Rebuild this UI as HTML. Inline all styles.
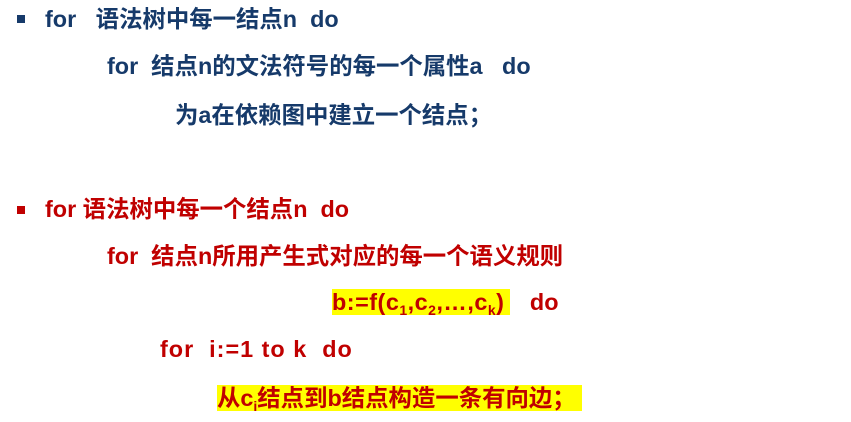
<!DOCTYPE html>
<html><head><meta charset="utf-8"><style>
html,body{margin:0;padding:0;background:#fff;width:851px;height:422px;overflow:hidden;position:relative}
.l{position:absolute;white-space:pre;font-family:"Liberation Sans","Noto Sans CJK SC",sans-serif;font-weight:bold;font-size:23.4px;line-height:27px}
.b{color:#163a6a}.r{color:#c00000}
.sq{position:absolute;width:8px;height:8px}
.hl{background:#ffff00}
sub{font-size:14px;vertical-align:-5px;line-height:0}
</style></head><body>
<div class="sq" style="left:17px;top:15px;background:#163a6a"></div>
<div class="l b" style="left:45px;top:6px">for   语法树中每一结点n  do</div>
<div class="l b" style="left:107px;top:53px">for  结点n的文法符号的每一个属性a   do</div>
<div class="l b" style="left:175px;top:102px">为a在依赖图中建立一个结点；</div>
<div class="sq" style="left:17px;top:206px;background:#c00000"></div>
<div class="l r" style="left:45px;top:196px">for 语法树中每一个结点n  do</div>
<div class="l r" style="left:107px;top:243px">for  结点n所用产生式对应的每一个语义规则</div>
<div class="l r" style="left:332px;top:289px"><span class="hl" style="letter-spacing:0.5px">b:=f(c<sub>1</sub>,c<sub>2</sub>,…,c<sub>k</sub>)<span style="display:inline-block;width:6px"></span></span>   do</div>
<div class="l r" style="left:160px;top:336px;letter-spacing:1px">for  i:=1 to k  do</div>
<div class="l r" style="left:217px;top:385px"><span class="hl">从c<sub>i</sub>结点到b结点构造一条有向边； </span></div>
</body></html>
